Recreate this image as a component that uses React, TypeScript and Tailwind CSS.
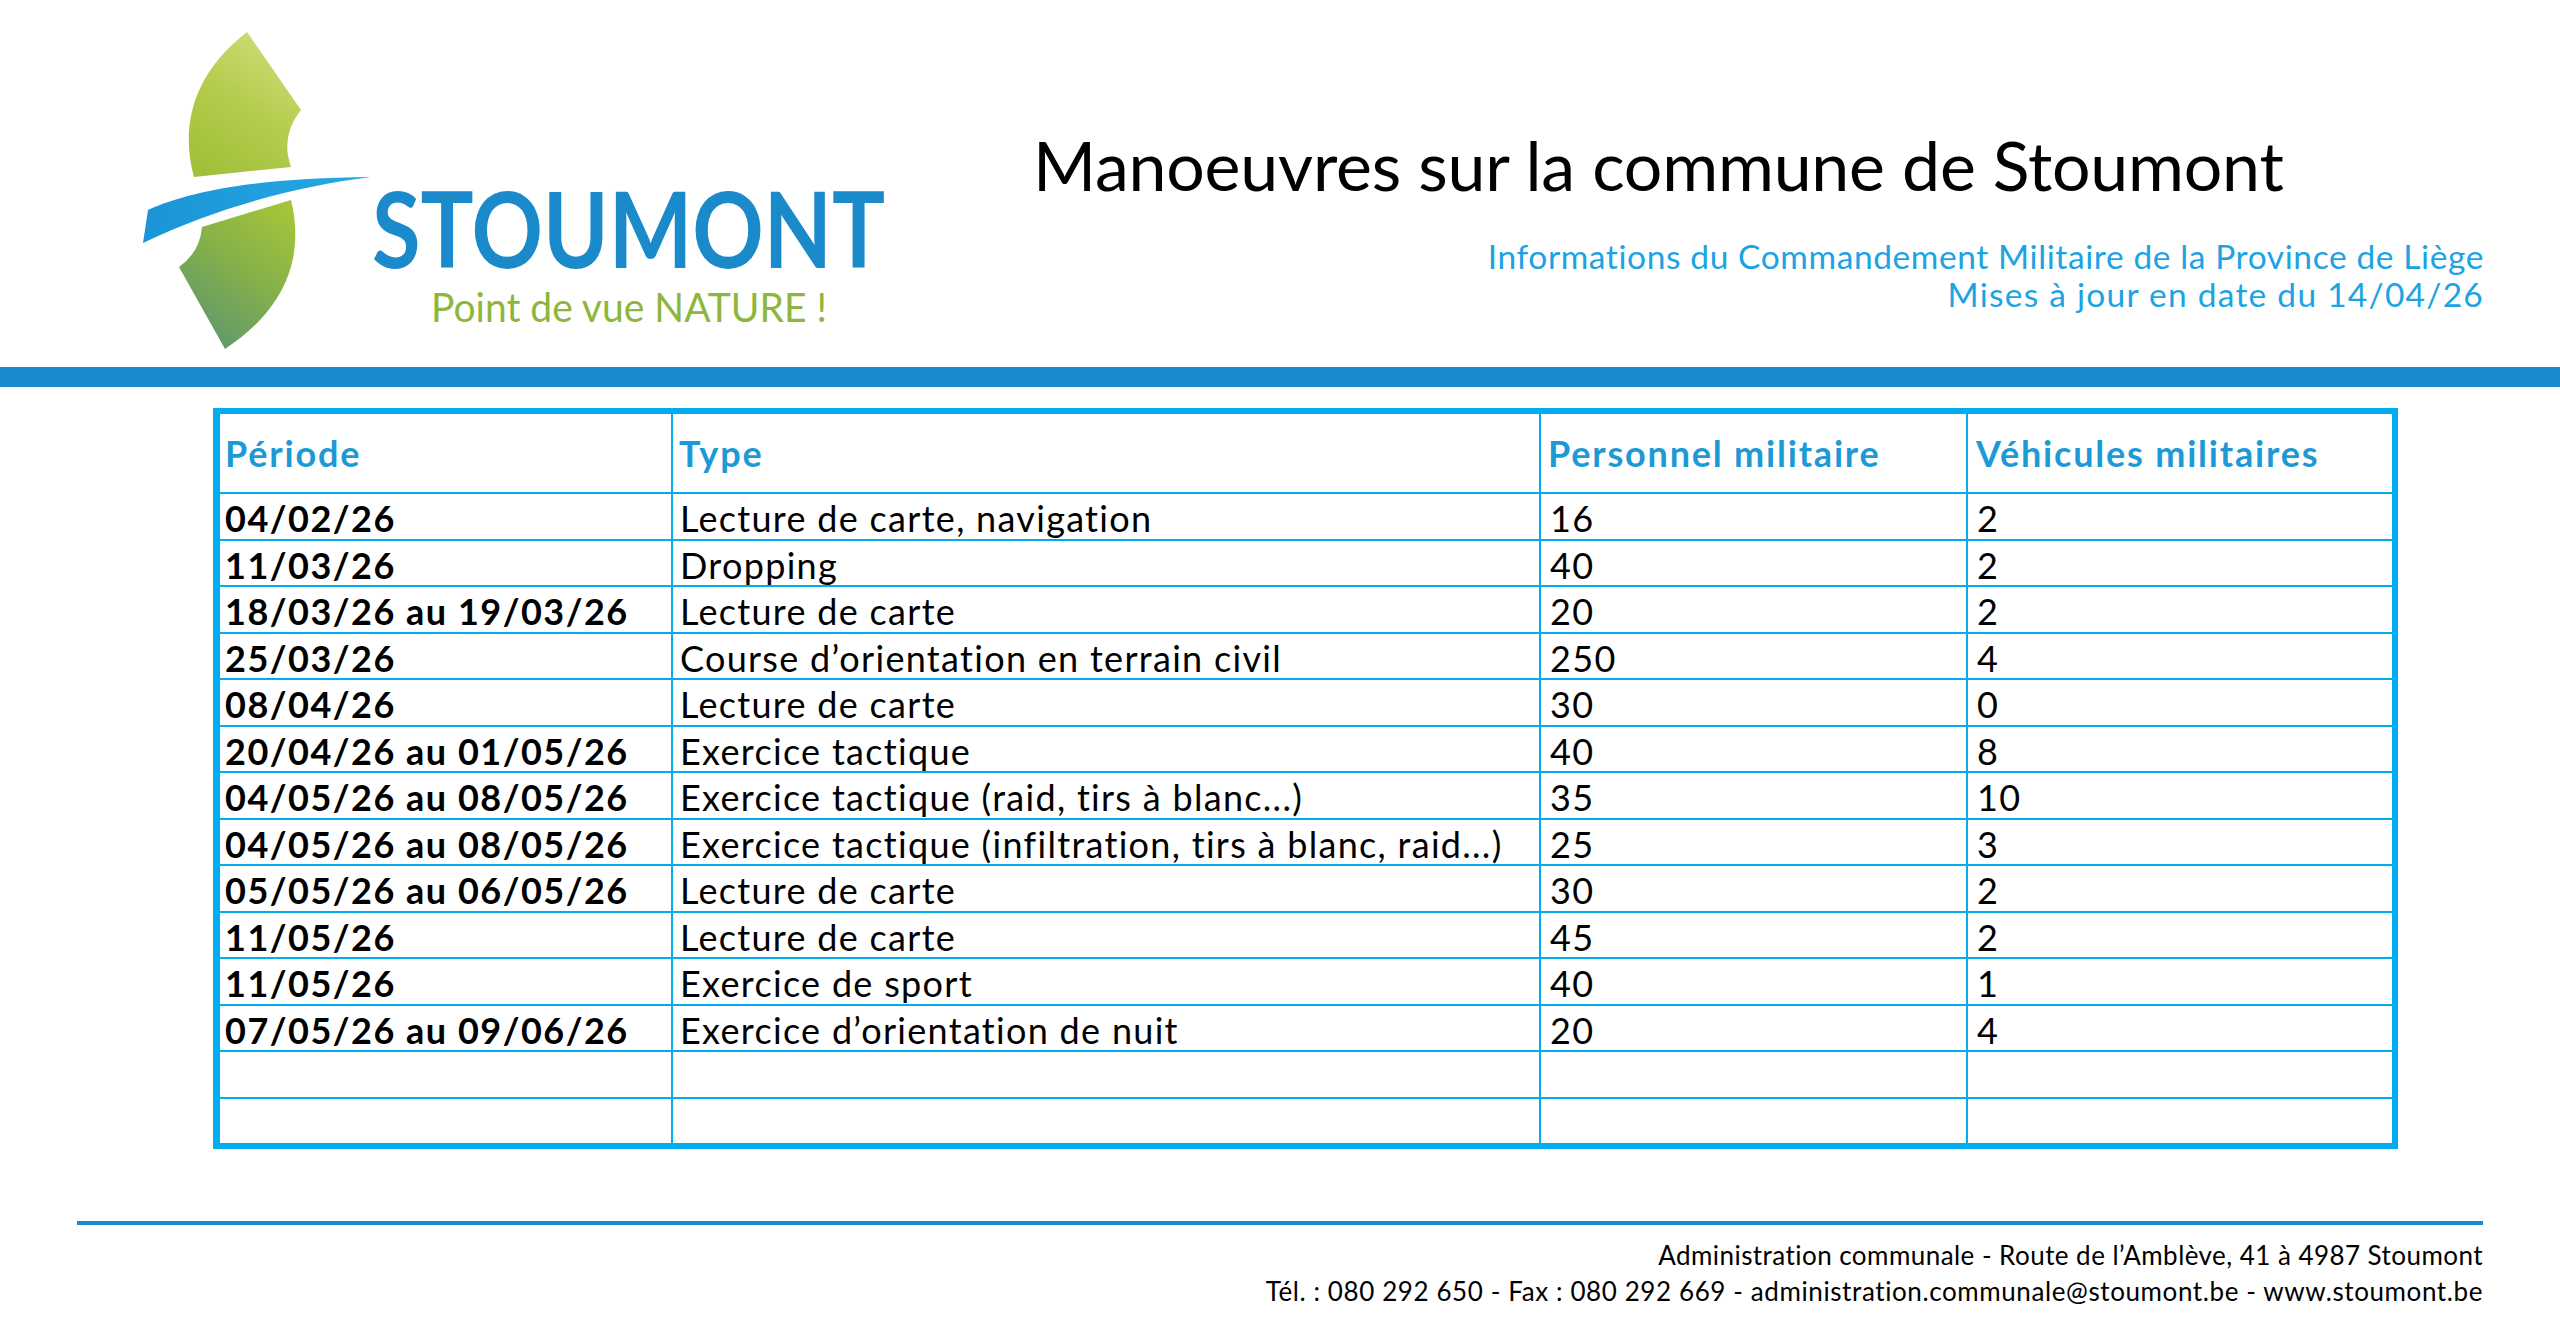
import React from "react";

const rows: [string, string, string, string][] = [
  ["04/02/26", "Lecture de carte, navigation", "16", "2"],
  ["11/03/26", "Dropping", "40", "2"],
  ["18/03/26 au 19/03/26", "Lecture de carte", "20", "2"],
  ["25/03/26", "Course d’orientation en terrain civil", "250", "4"],
  ["08/04/26", "Lecture de carte", "30", "0"],
  ["20/04/26 au 01/05/26", "Exercice tactique", "40", "8"],
  ["04/05/26 au 08/05/26", "Exercice tactique (raid, tirs à blanc...)", "35", "10"],
  ["04/05/26 au 08/05/26", "Exercice tactique (infiltration, tirs à blanc, raid...)", "25", "3"],
  ["05/05/26 au 06/05/26", "Lecture de carte", "30", "2"],
  ["11/05/26", "Lecture de carte", "45", "2"],
  ["11/05/26", "Exercice de sport", "40", "1"],
  ["07/05/26 au 09/06/26", "Exercice d’orientation de nuit", "20", "4"],
  ["", "", "", ""],
  ["", "", "", ""],
];

function Logo() {
  return (
    <svg width="900" height="367" viewBox="0 0 900 367" className="shrink-0">
      <defs>
        <linearGradient id="leafTop" x1="0.7" y1="0" x2="0.2" y2="1">
          <stop offset="0" stopColor="#cfdc78" />
          <stop offset="0.5" stopColor="#b4cc4c" />
          <stop offset="1" stopColor="#a0c03a" />
        </linearGradient>
        <linearGradient id="leafBot" x1="0.8" y1="0" x2="0.2" y2="1">
          <stop offset="0" stopColor="#a3c43a" />
          <stop offset="0.45" stopColor="#86b04a" />
          <stop offset="1" stopColor="#5a966f" />
        </linearGradient>
        <linearGradient id="swoosh" x1="0" y1="0" x2="1" y2="0">
          <stop offset="0" stopColor="#1a94d6" />
          <stop offset="1" stopColor="#27a8e4" />
        </linearGradient>
      </defs>
      <path d="M247,32 L301,110 Q280,136 291,167 L194,177 C181,130 190,76 247,32 Z" fill="url(#leafTop)" />
      <path d="M148,210 C192,190 262,178 371,177 C300,186 220,206 143,243 Z" fill="url(#swoosh)" />
      <path d="M202,227 L291,200 C302,245 296,302 225,349 L179,267 Q200,252 202,227 Z" fill="url(#leafBot)" />
      <text
        x="372"
        y="268"
        textLength="513"
        lengthAdjust="spacingAndGlyphs"
        fontSize="106"
        fontWeight="700"
        fill="#1a8acb"
        fontFamily="Lato, sans-serif"
      >
        STOUMONT
      </text>
      <text
        x="431"
        y="322"
        textLength="396"
        lengthAdjust="spacingAndGlyphs"
        fontSize="40"
        fill="#8db63c"
        fontFamily="Lato, sans-serif"
      >
        Point de vue NATURE !
      </text>
    </svg>
  );
}

export default function App() {
  return (
    <div className="w-[2560px] min-h-[1340px] bg-white font-['Lato',sans-serif] text-black">
      <header className="flex h-[367px]">
        <Logo />
        <div className="flex flex-1 flex-col pr-[76px]">
          <h1 className="whitespace-nowrap pl-[133px] pt-[131px] text-[68px] leading-none font-normal tracking-[-0.2px]">
            Manoeuvres sur la commune de Stoumont
          </h1>
          <div className="mt-[38px] whitespace-nowrap text-right text-[33.5px] leading-[38px] text-[#1ca3e3]">
            <p className="tracking-[0.6px]">Informations du Commandement Militaire de la Province de Liège</p>
            <p className="tracking-[1.25px]">Mises à jour en date du 14/04/26</p>
          </div>
        </div>
      </header>
      <div className="h-[20px] bg-[#1b8ace]" />
      <div className="ml-[213px] mt-[21px] w-[2185px] border-[#00aeef] border-l-[7px] border-t-[6px] border-r-[6px] border-b-[6px]">
        <div className="grid h-[80px] grid-cols-[453px_868px_427px_424px] border-b-2 border-[#00aeef] text-[36px] font-bold leading-none tracking-[1.8px] text-[#1d9ad6]">
          <div className="border-r-2 border-[#00aeef] pl-[5px] pt-[21px]">Période</div>
          <div className="border-r-2 border-[#00aeef] pl-[6px] pt-[21px]">Type</div>
          <div className="border-r-2 border-[#00aeef] pl-[7px] pt-[21px]">Personnel militaire</div>
          <div className="pl-[8px] pt-[21px]">Véhicules militaires</div>
        </div>
        {rows.map((r, i) => {
          const last = i === rows.length - 1;
          return (
            <div
              key={i}
              className={
                last
                  ? "grid h-[44px] grid-cols-[453px_868px_427px_424px] whitespace-nowrap text-[36px] leading-none"
                  : "grid h-[46.5px] grid-cols-[453px_868px_427px_424px] whitespace-nowrap border-b-2 border-[#00aeef] text-[36px] leading-none"
              }
            >
              <div className="border-r-2 border-[#00aeef] pl-[5px] pt-[6px] font-bold tracking-[1.5px]">{r[0]}</div>
              <div className="border-r-2 border-[#00aeef] pl-[7px] pt-[6px] tracking-[1.3px]">{r[1]}</div>
              <div className="border-r-2 border-[#00aeef] pl-[9px] pt-[6px] tracking-[1.4px]">{r[2]}</div>
              <div className="pl-[9px] pt-[6px] tracking-[1.4px]">{r[3]}</div>
            </div>
          );
        })}
      </div>
      <div className="ml-[77px] mt-[72px] h-[4px] w-[2406px] bg-[#1b8ace]" />
      <footer className="mt-[12px] whitespace-nowrap pr-[77px] text-right text-[26px] leading-[36px]">
        <p className="tracking-[0.45px]">Administration communale - Route de l’Amblève, 41 à 4987 Stoumont</p>
        <p className="tracking-[0.6px]">Tél. : 080 292 650 - Fax : 080 292 669 - administration.communale@stoumont.be - www.stoumont.be</p>
      </footer>
    </div>
  );
}
